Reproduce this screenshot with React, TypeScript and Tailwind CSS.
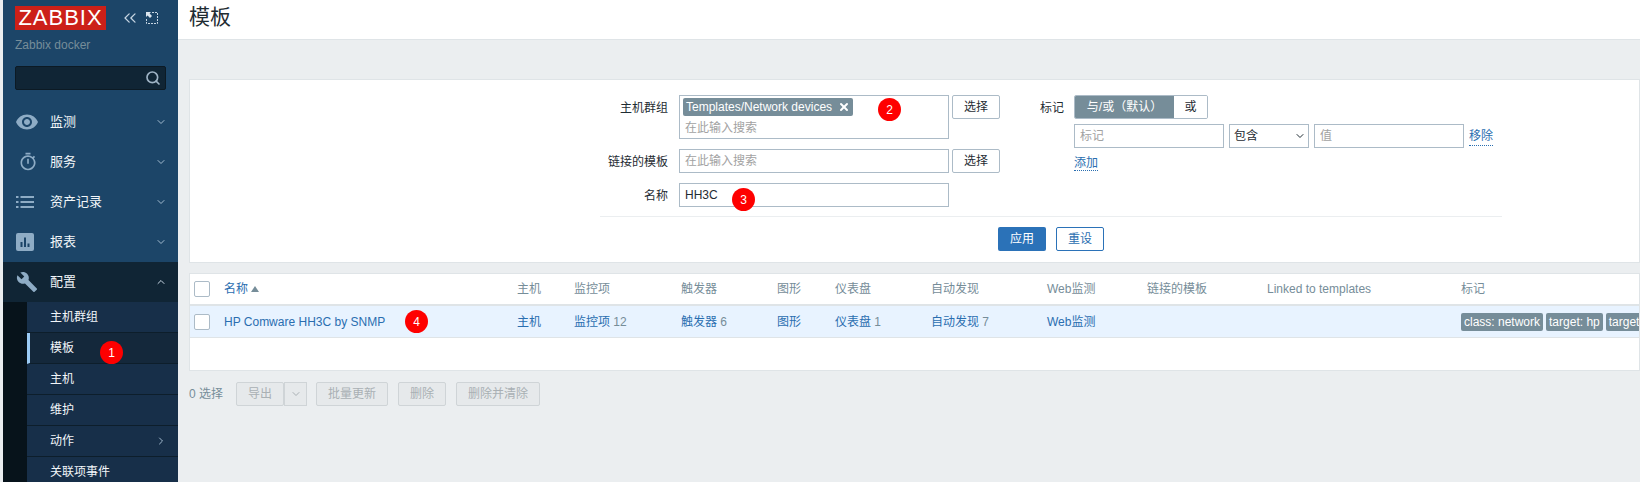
import { ChevronDown, ChevronRight, ChevronUp, ChevronsLeft, Search, X } from "lucide-react";
import { MdBuild, MdOutlineTimer, MdRemoveRedEye } from "react-icons/md";
import type { ReactNode } from "react";

function ReportIcon() {
  return (
    <svg viewBox="0 0 18 18" className="ml-px h-[18px] w-[18px]">
      <rect width="18" height="18" rx="2" fill="#8eacc5" />
      <path d="M4.5 9h2v5h-2zM8 4.5h2V14H8zM11.5 10.5h2V14h-2z" fill="#1c4568" />
    </svg>
  );
}

function ListIcon() {
  return (
    <svg viewBox="0 0 18 12" className="ml-px h-3 w-[18px]" fill="#8eacc5">
      <path d="M0 0h2.500v2H0zM4.500 0H18v2H4.500zM0 5h2.500v2H0zM4.500 5H18v2H4.500zM0 10h2.500v2H0zM4.500 10H18v2H4.500z" />
    </svg>
  );
}

function ExpandIcon() {
  return (
    <svg viewBox="0 0 12 12" className="h-3 w-3" fill="none" stroke="#c7d6e3">
      <path d="M6 .5h5.500V11.500H.5V6" strokeDasharray="2 1" />
      <path d="M0 0h5L3.600 1.600 6 4 4 6 1.600 3.600 0 5z" fill="#dbe6ef" stroke="none" />
    </svg>
  );
}

function Marker({ n, className }: { n: number; className: string }) {
  return (
    <span className={`absolute flex h-[23px] w-[23px] items-center justify-center rounded-full bg-[#fe0000] text-[12px] text-white ${className}`}>
      {n}
    </span>
  );
}

function MenuItem({ icon, label, active, open }: { icon: ReactNode; label: string; active?: boolean; open?: boolean }) {
  return (
    <div className={`flex h-10 items-center pl-[12px] pr-[11px] text-[13px] text-[#f2f6f9] ${active ? "bg-[#102535]" : ""}`}>
      <span className="flex w-[35px] justify-start">{icon}</span>
      <span className="flex-1">{label}</span>
      {open ? <ChevronUp className="h-3 w-3 text-[#c7d6e3]" /> : <ChevronDown className="h-3 w-3 text-[#a3bbcf]" />}
    </div>
  );
}

function SubItem({ label, current, arrow, marker }: { label: string; current?: boolean; arrow?: boolean; marker?: ReactNode }) {
  return (
    <div className={`relative flex h-[31px] items-center border-b border-[#0d1e2b] pr-[11px] text-[12px] text-[#f2f6f9] ${current ? "border-l-[3px] border-l-[#9bcbf5] bg-[#14283b] pl-[20px]" : "pl-[23px]"}`}>
      <span className="flex-1">{label}</span>
      {arrow && <ChevronRight className="h-3 w-3 text-[#a3bbcf]" />}
      {marker}
    </div>
  );
}

function TextInput({ placeholder, value, width = "w-[270px]" }: { placeholder?: string; value?: string; width?: string }) {
  return (
    <div className={`flex h-6 items-center border border-[#acbbc7] bg-white px-[5px] text-[12px] ${width} ${value ? "text-[#1f2c33]" : "text-[#a2a2a2]"}`}>
      {value ?? placeholder}
    </div>
  );
}

function PickButton() {
  return (
    <div className="flex h-6 w-12 items-center justify-center rounded-[2px] border border-[#acbbc7] bg-white text-[12px] text-[#1f2c33]">
      选择
    </div>
  );
}

function FilterLabel({ children }: { children: ReactNode }) {
  return <div className="w-[85px] pt-[4px] text-right text-[12px] text-[#1f2c33]">{children}</div>;
}

function GhostButton({ label, width }: { label: string; width: string }) {
  return (
    <div className={`flex h-6 items-center justify-center rounded-[2px] border border-[#cfd4d7] bg-[#e6e9eb] text-[12px] text-[#a9b0b4] ${width}`}>
      {label}
    </div>
  );
}

const columns = "grid grid-cols-[34px_293px_57px_107px_96px_58px_96px_116px_100px_120px_194px_220px]";
const linkBlue = "text-[#2a6eb0]";

function Tag({ children }: { children: ReactNode }) {
  return <span className="shrink-0 rounded-[2px] bg-[#768d99] px-[3px] py-px text-[12px] leading-[16px] text-white">{children}</span>;
}

function Checkbox() {
  return <span className="ml-[4px] block h-4 w-4 rounded-[2px] border border-[#acbbc7] bg-white" />;
}

export default function App() {
  return (
    <div className="flex h-[482px] w-[1640px] overflow-hidden bg-[#ebeef0] font-['Liberation_Sans','Noto_Sans_CJK_SC',sans-serif]">
      <aside className="ml-[3px] flex w-[175px] shrink-0 flex-col overflow-hidden bg-[#1c4568]">
        <div className="flex shrink-0 items-center pl-3 pt-[6px]">
          <div className="flex h-6 w-[91px] items-center justify-center bg-[#cc2018] text-[22px] leading-none tracking-[1px] text-white">ZABBIX</div>
          <ChevronsLeft className="ml-[14px] h-[20px] w-[20px] text-[#c7d6e3]" strokeWidth={1.5} />
          <span className="ml-[6px]"><ExpandIcon /></span>
        </div>
        <div className="mt-[6px] shrink-0 pl-3 text-[12px] text-[#768d99]">Zabbix docker</div>
        <div className="mx-3 mt-3 flex h-6 shrink-0 items-center justify-end rounded-[2px] border border-[#0c1a24] bg-[#102535] pr-1">
          <Search className="h-4 w-4 text-[#9fb4c6]" strokeWidth={2.5} />
        </div>
        <div className="mt-3 shrink-0">
          <MenuItem label="监测" icon={<MdRemoveRedEye className="h-[24px] w-[24px] text-[#8eacc5]" />} />
          <MenuItem label="服务" icon={<MdOutlineTimer className="ml-[3px] h-[20px] w-[20px] text-[#8eacc5]" />} />
          <MenuItem label="资产记录" icon={<ListIcon />} />
          <MenuItem label="报表" icon={<ReportIcon />} />
          <MenuItem label="配置" active open icon={<MdBuild className="ml-px h-[22px] w-[22px] text-[#8eacc5]" />} />
        </div>
        <div className="flex min-h-0 flex-1 overflow-hidden bg-[#07131b]">
          <div className="ml-6 flex-1 bg-[#172f49]">
            <SubItem label="主机群组" />
            <SubItem label="模板" current marker={<Marker n={1} className="left-[70px] top-[8px]" />} />
            <SubItem label="主机" />
            <SubItem label="维护" />
            <SubItem label="动作" arrow />
            <SubItem label="关联项事件" />
          </div>
        </div>
      </aside>

      <main className="min-w-0 flex-1">
        <header className="flex h-[40px] items-center border-b border-[#dfe4e7] bg-white pb-[6px] pl-[11px] text-[21px] text-[#1f2c33]">模板</header>

        <section className="relative ml-[11px] mt-[39px] h-[184px] border border-[#dfe4e7] bg-white">
          <div className="flex pl-[404px] pt-[15px]">
            <div className="flex flex-col gap-[10px]">
              <div className="flex gap-[11px]">
                <div className="ml-[-11px]"><FilterLabel>主机群组</FilterLabel></div>
                <div className="h-11 w-[270px] border border-[#acbbc7] bg-white pl-[3px] pt-[2px]">
                  <span className="flex h-[18px] w-[170px] items-center whitespace-nowrap rounded-[2px] bg-[#768d99] pl-[3px] pr-[3px] text-[12px] text-white">
                    Templates/Network devices
                    <X className="ml-auto h-3 w-3" strokeWidth={4} />
                  </span>
                  <div className="pl-[2px] pt-[3px] text-[12px] text-[#a2a2a2]">在此输入搜索</div>
                </div>
                <div className="ml-[-8px]"><PickButton /></div>
              </div>
              <div className="flex gap-[11px]">
                <div className="ml-[-11px]"><FilterLabel>链接的模板</FilterLabel></div>
                <TextInput placeholder="在此输入搜索" />
                <div className="ml-[-8px]"><PickButton /></div>
              </div>
              <div className="flex gap-[11px]">
                <div className="ml-[-11px]"><FilterLabel>名称</FilterLabel></div>
                <TextInput value="HH3C" />
              </div>
            </div>
            <div className="ml-[15px] flex gap-[11px]">
              <div className="w-[48px] pt-[4px] text-right text-[12px] text-[#1f2c33]">
                <span className="relative left-[1px]">标记</span>
              </div>
              <div className="flex flex-col gap-[5px]">
                <div className="flex h-6 w-[134px] overflow-hidden rounded-[2px] border border-[#acbbc7] text-[12px]">
                  <span className="flex w-[99px] items-center justify-center bg-[#768d99] text-white">与/或（默认）</span>
                  <span className="flex flex-1 items-center justify-center bg-white text-[#1f2c33]">或</span>
                </div>
                <div className="flex items-center gap-[5px]">
                  <TextInput placeholder="标记" width="w-[150px]" />
                  <div className="flex h-6 w-20 items-center justify-between border border-[#acbbc7] bg-white pl-[4px] pr-[2px] text-[12px] text-[#1f2c33]">
                    包含
                    <ChevronDown className="h-3 w-3" />
                  </div>
                  <TextInput placeholder="值" width="w-[150px]" />
                  <span className={`border-b border-dotted border-[#2a6eb0] text-[12px] ${linkBlue}`}>移除</span>
                </div>
                <div className="mt-[-3px]">
                  <span className={`border-b border-dotted border-[#2a6eb0] text-[12px] ${linkBlue}`}>添加</span>
                </div>
              </div>
            </div>
          </div>
          <div className="ml-[410px] mr-[137px] mt-[9px] border-t border-[#ebeef0]" />
          <div className="flex gap-[10px] pl-[808px] pt-[10px]">
            <div className="flex h-6 w-12 items-center justify-center rounded-[2px] bg-[#2b72b8] text-[12px] text-white">应用</div>
            <div className="flex h-6 w-12 items-center justify-center rounded-[2px] border border-[#2b72b8] bg-white text-[12px] text-[#2a6eb0]">重设</div>
          </div>
          <Marker n={2} className="left-[688px] top-[18px]" />
          <Marker n={3} className="left-[542px] top-[108px]" />
        </section>

        <section className="relative ml-[11px] mt-[10px] h-[98px] overflow-hidden border border-[#dfe4e7] bg-white text-[12px]">
          <div className={`${columns} h-[32px] items-center border-b-2 border-[#dfe4e7] text-[#768d99]`}>
            <Checkbox />
            <span className={`flex items-center gap-[3px] ${linkBlue}`}>
              名称
              <span className="h-0 w-0 border-x-[4px] border-b-[6px] border-x-transparent border-b-[#768d99]" />
            </span>
            <span>主机</span>
            <span>监控项</span>
            <span>触发器</span>
            <span>图形</span>
            <span>仪表盘</span>
            <span>自动发现</span>
            <span>Web监测</span>
            <span>链接的模板</span>
            <span>Linked to templates</span>
            <span>标记</span>
          </div>
          <div className={`${columns} h-[32px] items-center border-b border-[#dfe4e7] bg-[#e8f3ff] text-[#768d99]`}>
            <Checkbox />
            <span className={linkBlue}>HP Comware HH3C by SNMP</span>
            <span className={linkBlue}>主机</span>
            <span><span className={linkBlue}>监控项</span> 12</span>
            <span><span className={linkBlue}>触发器</span> 6</span>
            <span className={linkBlue}>图形</span>
            <span><span className={linkBlue}>仪表盘</span> 1</span>
            <span><span className={linkBlue}>自动发现</span> 7</span>
            <span className={linkBlue}>Web监测</span>
            <span />
            <span />
            <span className="flex gap-[3px]">
              <Tag>class: network</Tag>
              <Tag>target: hp</Tag>
              <Tag>target: hh3c</Tag>
            </span>
          </div>
          <Marker n={4} className="left-[215px] top-[36px]" />
        </section>

        <div className="ml-[11px] mt-[11px] flex items-center text-[12px] text-[#768d99]">
          <span className="w-[47px]">0 选择</span>
          <GhostButton label="导出" width="w-12" />
          <span className="flex h-6 w-[23px] items-center justify-center border border-[#cfd4d7] bg-[#e6e9eb]">
            <ChevronDown className="h-3 w-3 text-[#a9b0b4]" />
          </span>
          <div className="ml-[9px] flex gap-[10px]">
            <GhostButton label="批量更新" width="w-[72px]" />
            <GhostButton label="删除" width="w-12" />
            <GhostButton label="删除并清除" width="w-[84px]" />
          </div>
        </div>
      </main>
    </div>
  );
}
